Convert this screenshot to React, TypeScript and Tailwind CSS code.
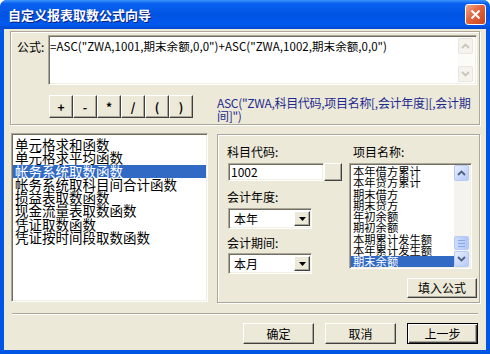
import React from 'react';

const FONT = "font-['Noto_Sans_CJK_SC',sans-serif]";

const leftItems = [
  '单元格求和函数',
  '单元格求平均函数',
  '帐务系统取数函数',
  '帐务系统取科目间合计函数',
  '损益表取数函数',
  '现金流量表取数函数',
  '凭证取数函数',
  '凭证按时间段取数函数',
];

const rightItems = [
  '本年借方累计',
  '本年贷方累计',
  '期末借方',
  '期末贷方',
  '年初余额',
  '期初余额',
  '本期累计发生额',
  '本年累计发生额',
  '期末余额',
];

// classic raised 3D button
const Raised = ({
  className = '',
  children,
  isDefault = false,
}: {
  className?: string;
  children?: React.ReactNode;
  isDefault?: boolean;
}) => (
  <div
    className={`flex shrink-0 items-center justify-center bg-[#ece9d8] text-[12px] text-black ${
      isDefault
        ? 'border border-black shadow-[inset_1px_1px_0_#fff,inset_-1px_-1px_0_#404040,inset_-2px_-2px_0_#aca899]'
        : 'border border-t-white border-l-white border-b-[#404040] border-r-[#404040] shadow-[inset_-1px_-1px_0_#aca899]'
    } ${className}`}
  >
    {children}
  </div>
);

const Sunken = ({ className = '', children }: { className?: string; children?: React.ReactNode }) => (
  <div
    className={`border border-t-[#aca899] border-l-[#aca899] border-b-white border-r-white bg-white shadow-[inset_1px_1px_0_#716f64,inset_-1px_-1px_0_#f1efe2] ${className}`}
  >
    {children}
  </div>
);

const Chevron = ({ up, color }: { up: boolean; color: string }) => (
  <svg width="9" height="6" viewBox="0 0 9 6">
    <path
      d={up ? 'M1 5 L4.5 1.5 L8 5' : 'M1 1 L4.5 4.5 L8 1'}
      fill="none"
      stroke={color}
      strokeWidth="1.8"
    />
  </svg>
);

const ScrollBtn = ({ up, disabled }: { up: boolean; disabled?: boolean }) => (
  <div
    className={`flex h-[16px] w-[15px] items-center justify-center rounded-[2px] border ${
      disabled
        ? 'border-[#e8e6dc] bg-[#f4f3ee]'
        : 'border-[#b7caf5] bg-[linear-gradient(135deg,#e8effd_0%,#c9d8fa_60%,#b6cbf7_100%)]'
    }`}
  >
    <Chevron up={up} color={disabled ? '#c9c7ba' : '#4d6185'} />
  </div>
);

const Etched = ({ className = '', children }: { className?: string; children?: React.ReactNode }) => (
  <div className={`border border-[#aca899] shadow-[inset_1px_1px_0_#fff,1px_1px_0_#fff] ${className}`}>
    {children}
  </div>
);

const Combo = ({ value, className = '' }: { value: string; className?: string }) => (
  <Sunken className={`flex h-[21px] w-[84px] items-center justify-between ${className}`}>
    <span className="pl-[5px] text-[12px] leading-[14px]">{value}</span>
    <Raised className="mr-[1px] h-[15px] w-[16px]">
      <svg width="7" height="4" viewBox="0 0 7 4">
        <path d="M0 0 H7 L3.5 4 Z" fill="#000" />
      </svg>
    </Raised>
  </Sunken>
);

export default function App() {
  return (
    <div className={`${FONT} flex h-[354px] w-[490px] flex-col overflow-hidden rounded-t-[7px] bg-[#0055e5]`}>
      {/* title bar */}
      <div className="flex h-[29px] shrink-0 items-center justify-between bg-[linear-gradient(to_bottom,#3d95ff_0%,#0a61ef_12%,#0054e3_50%,#0059ee_86%,#0046cc_100%)] pl-[8px] pr-[4px]">
        <span className="text-[13px] font-bold leading-[15px] text-white [text-shadow:1px_1px_0_#0a1f80]">
          自定义报表取数公式向导
        </span>
        <div className="flex h-[21px] w-[21px] items-center justify-center rounded-[3px] border border-white bg-[linear-gradient(135deg,#f0a98e_0%,#e2643e_45%,#c9441c_100%)]">
          <svg width="11" height="11" viewBox="0 0 11 11">
            <path d="M1.5 1.5 L9.5 9.5 M9.5 1.5 L1.5 9.5" stroke="#fff" strokeWidth="2" />
          </svg>
        </div>
      </div>

      {/* client area */}
      <div className="mx-[4px] mb-[4px] flex flex-1 flex-col bg-[#ece9d8] text-black">
        {/* formula group */}
        <Etched className="ml-[6px] mt-[2px] h-[94px] w-[470px] shrink-0">
          <div className="flex pt-[3px]">
            <span className="w-[37px] shrink-0 pl-[6px] pt-[5px] text-[12px] leading-[14px]">公式:</span>
            <Sunken className="flex h-[50px] w-[429px]">
              <div className="flex-1 overflow-hidden whitespace-nowrap pl-[1px] pt-[3px] text-[11.5px] leading-[14px] tracking-[0.05px]">
                =ASC("ZWA,1001,期末余额,0,0")+ASC("ZWA,1002,期末余额,0,0")
              </div>
              <div className="my-[2px] mr-[2px] flex w-[16px] shrink-0 flex-col justify-between bg-[#fbfbf9]">
                <ScrollBtn up disabled />
                <ScrollBtn up={false} disabled />
              </div>
            </Sunken>
          </div>
          <div className="mt-[10px] flex">
            <div className="ml-[38px] flex">
              {['+', '-', '*', '/', '(', ')'].map((s) => (
                <Raised key={s} className="h-[23px] w-[24px] font-bold">
                  {s}
                </Raised>
              ))}
            </div>
            <div className="ml-[24px] whitespace-nowrap pt-[1px] text-[12px] leading-[13px] tracking-[-0.3px] text-[#1f2a8f]">
              ASC("ZWA,科目代码,项目名称[,会计年度][,会计期
              <br />
              间]")
            </div>
          </div>
        </Etched>

        {/* main row */}
        <div className="ml-[7px] mt-[8px] flex gap-[9px]">
          <Sunken className="h-[169px] w-[197px] shrink-0 p-[1px]">
            <div className="pt-[3px] text-[13.5px] leading-[13.3px]">
              {leftItems.map((t, i) => (
                <div
                  key={t}
                  className={`whitespace-nowrap pl-[2px] ${i === 2 ? 'bg-[#316ac5] text-white' : ''}`}
                >
                  {t}
                </div>
              ))}
            </div>
          </Sunken>

          <Etched className="mt-[1px] flex h-[169px] w-[263px] shrink-0">
            {/* left column */}
            <div className="flex w-[131px] flex-col pl-[9px] pt-[10px]">
              <span className="text-[12px] leading-[14px]">科目代码:</span>
              <div className="mt-[4px] flex pl-[1px]">
                <Sunken className="flex h-[18px] w-[96px] items-center">
                  <span className="pl-[2px] text-[12px] leading-[14px]">1002</span>
                </Sunken>
                <Raised className="h-[18px] w-[18px]" />
              </div>
              <span className="mt-[9px] text-[12px] leading-[14px]">会计年度:</span>
              <Combo value="本年" className="ml-[1px] mt-[4px]" />
              <span className="mt-[7px] text-[12px] leading-[14px]">会计期间:</span>
              <Combo value="本月" className="ml-[1px] mt-[3px]" />
            </div>

            {/* right column */}
            <div className="flex w-[128px] flex-col pt-[10px]">
              <span className="pl-[4px] text-[12px] leading-[14px]">项目名称:</span>
              <Sunken className="mt-[4px] flex h-[106px] w-[123px] p-[1px]">
                <div className="flex-1 overflow-hidden pt-[1px] text-[11.3px] leading-[11.3px]">
                  {rightItems.map((t, i) => (
                    <div
                      key={t}
                      className={`whitespace-nowrap pl-[2px] ${
                        i === rightItems.length - 1 ? 'bg-[#316ac5] text-white' : ''
                      }`}
                    >
                      {t}
                    </div>
                  ))}
                </div>
                <div className="flex w-[16px] flex-col justify-between bg-[#f4f3ee]">
                  <ScrollBtn up />
                  <div className="flex flex-1 flex-col justify-end pb-[1px]">
                    <div className="flex h-[14px] w-[15px] flex-col items-center justify-center gap-[2px] rounded-[2px] border border-[#b7caf5] bg-[linear-gradient(90deg,#cddafc_0%,#bcd0fb_60%,#b0c6f7_100%)]">
                      <div className="h-[1px] w-[7px] bg-[#8aa6e4]" />
                      <div className="h-[1px] w-[7px] bg-[#8aa6e4]" />
                      <div className="h-[1px] w-[7px] bg-[#8aa6e4]" />
                    </div>
                  </div>
                  <ScrollBtn up={false} />
                </div>
              </Sunken>
              <Raised className="mt-[9px] h-[20px] w-[70px] self-end">填入公式</Raised>
            </div>
          </Etched>
        </div>

        {/* separator */}
        <div className="ml-[8px] mt-[10px] h-[2px] w-[466px] border-t border-b border-t-[#aca899] border-b-white" />

        {/* bottom buttons */}
        <div className="mt-[8px] flex justify-end gap-[11px] pr-[8px]">
          <Raised className="h-[21px] w-[71px]">确定</Raised>
          <Raised className="h-[21px] w-[71px]">取消</Raised>
          <Raised isDefault className="h-[21px] w-[71px]">
            上一步
          </Raised>
        </div>
      </div>
    </div>
  );
}
